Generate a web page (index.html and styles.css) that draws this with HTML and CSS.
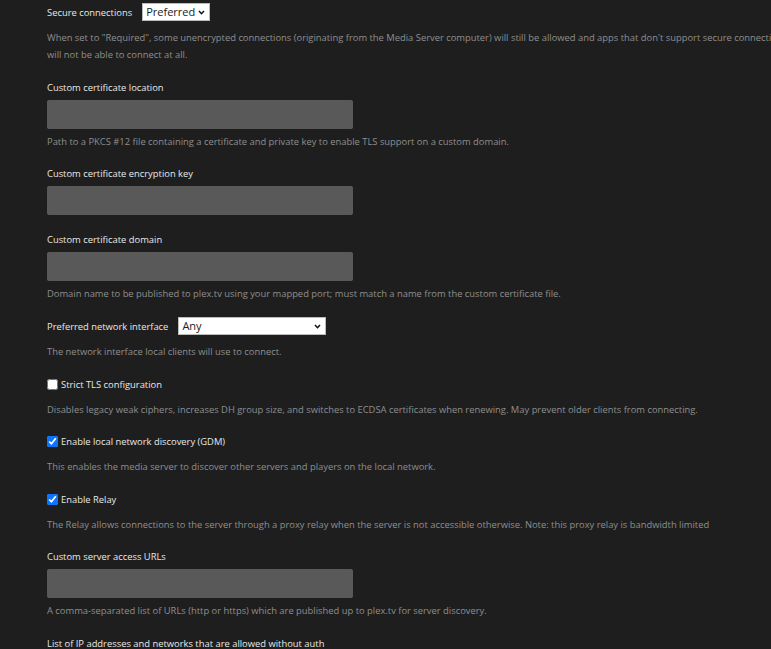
FILE: index.html
```html
<!DOCTYPE html>
<html lang="en">
<head>
    <meta charset="UTF-8">
    <title>Network Settings</title>
    <link rel="stylesheet" href="styles.css">
</head>
<body>
    <form class="settings">
        <div class="setting">
            <div class="row">
                <label class="label" for="secureConnections">Secure connections</label>
                <span class="select-wrap small">
                    <select id="secureConnections">
                        <option>Preferred</option>
                        <option>Required</option>
                        <option>Disabled</option>
                    </select>
                    <svg class="chevron" viewBox="0 0 8 6" width="7" height="5"><path d="M1 1.2 L4 4.4 L7 1.2" fill="none" stroke="#111" stroke-width="1.8"/></svg>
                </span>
            </div>
            <p class="desc after-row">When set to "Required", some unencrypted connections (originating from the Media Server computer) will still be allowed and apps that don't support secure connections will not be able to connect at all.</p>
        </div>

        <div class="setting">
            <label class="label" for="certLocation">Custom certificate location</label>
            <input class="text" type="text" id="certLocation">
            <p class="desc">Path to a PKCS #12 file containing a certificate and private key to enable TLS support on a custom domain.</p>
        </div>

        <div class="setting">
            <label class="label" for="certKey">Custom certificate encryption key</label>
            <input class="text" type="text" id="certKey">
        </div>

        <div class="setting">
            <label class="label" for="certDomain">Custom certificate domain</label>
            <input class="text" type="text" id="certDomain">
            <p class="desc">Domain name to be published to plex.tv using your mapped port; must match a name from the custom certificate file.</p>
        </div>

        <div class="setting">
            <div class="row">
                <label class="label" for="networkInterface">Preferred network interface</label>
                <span class="select-wrap wide">
                    <select id="networkInterface">
                        <option>Any</option>
                    </select>
                    <svg class="chevron" viewBox="0 0 8 6" width="7" height="5"><path d="M1 1.2 L4 4.4 L7 1.2" fill="none" stroke="#111" stroke-width="1.8"/></svg>
                </span>
            </div>
            <p class="desc after-row">The network interface local clients will use to connect.</p>
        </div>

        <div class="setting">
            <label class="check"><input type="checkbox"> Strict TLS configuration</label>
            <p class="desc after-row">Disables legacy weak ciphers, increases DH group size, and switches to ECDSA certificates when renewing. May prevent older clients from connecting.</p>
        </div>

        <div class="setting">
            <label class="check"><input type="checkbox" checked> Enable local network discovery (GDM)</label>
            <p class="desc after-row">This enables the media server to discover other servers and players on the local network.</p>
        </div>

        <div class="setting">
            <label class="check"><input type="checkbox" checked> Enable Relay</label>
            <p class="desc after-row">The Relay allows connections to the server through a proxy relay when the server is not accessible otherwise. Note: this proxy relay is bandwidth limited</p>
        </div>

        <div class="setting">
            <label class="label" for="customUrls">Custom server access URLs</label>
            <input class="text" type="text" id="customUrls">
            <p class="desc">A comma-separated list of URLs (http or https) which are published up to plex.tv for server discovery.</p>
        </div>

        <div class="setting">
            <label class="label" for="allowedNetworks">List of IP addresses and networks that are allowed without auth</label>
            <input class="text" type="text" id="allowedNetworks">
        </div>
    </form>
</body>
</html>
```

FILE: styles.css
```css
body {
    background: #1e1e1e;
    color: #e6e6e6;
    font-family: 'Open Sans', 'Noto Sans', Arial, sans-serif;
    font-size: 9.4px;
    line-height: 17px;
    margin: 0;
    overflow: hidden;
}
.settings {
    width: 745px;
    padding: 3px 0 0 47px;
}
.setting {
    margin-bottom: 15.5px;
}
.row {
    display: flex;
    align-items: center;
    gap: 10px;
    height: 18px;
}
.label {
    display: block;
    color: #e8e8e8;
}
.desc {
    margin: 4px 0 0;
    color: #8e8e8e;
}
.desc.after-row {
    margin-top: 8px;
}
.text {
    display: block;
    box-sizing: border-box;
    width: 306px;
    height: 29px;
    margin-top: 4px;
    background: #595959;
    border: none;
    border-radius: 2px;
    outline: none;
}
.select-wrap {
    position: relative;
    display: inline-block;
    height: 18px;
}
.select-wrap select {
    appearance: none;
    -webkit-appearance: none;
    box-sizing: border-box;
    height: 18px;
    padding: 0 0 0 3px;
    margin: 0;
    background: #fff;
    color: #222;
    border: 1px solid #bbb;
    border-radius: 0;
    font-family: 'Open Sans', 'Noto Sans', Arial, sans-serif;
    font-size: 11px;
    line-height: 16px;
}
.select-wrap.small select {
    width: 68px;
}
.select-wrap.wide select {
    width: 148px;
}
.chevron {
    position: absolute;
    right: 5px;
    top: 7px;
    pointer-events: none;
}
.check {
    display: flex;
    align-items: center;
    color: #e8e8e8;
}
.check input {
    width: 11px;
    height: 11px;
    margin: 0 3px 0 0;
    accent-color: #0a74ff;
}
```
